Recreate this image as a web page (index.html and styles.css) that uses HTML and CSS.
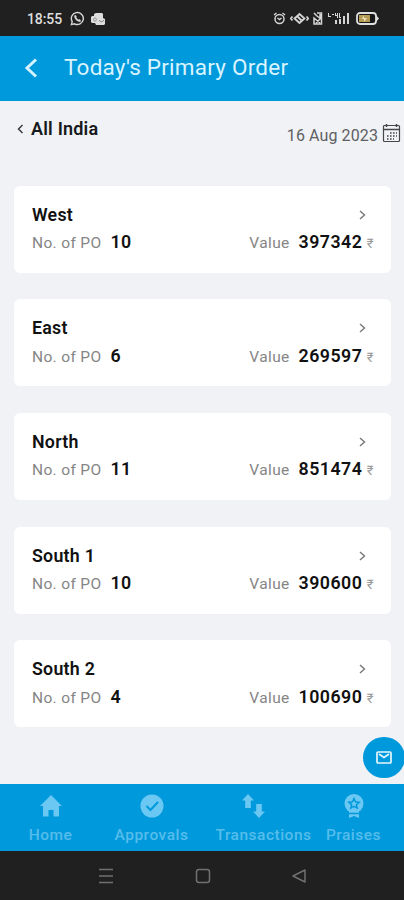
FILE: index.html
```
<!DOCTYPE html>
<html lang="en">
<head>
<meta charset="utf-8">
<title>Today's Primary Order</title>
<link rel="stylesheet" href="styles.css">
</head>
<body>
<div class="phone">
  <div class="status">
    <span class="clock">18:55</span>
    <svg class="whatsapp" width="15" height="15" viewBox="0 0 15 15" fill="none" stroke="#d8d8d8"><path stroke-width="1.4" d="M1.4 13.6l.8-3A6 6 0 1 1 4.500 12.800z"/><path stroke-width="1.800" d="M5 4.500c0 3 2.500 5.500 5.500 5.500M5 4.500l1 1.800M10.500 10l-1.700-1"/></svg>
    <svg class="outlook" width="14" height="12" viewBox="0 0 14 12"><path fill="#ddd" d="M5 0h6l1 1v4l2 1v5l-1 1H5L4 10H1L0 9V4l1-1h2V1z"/><circle cx="4" cy="6.500" r="1.500" fill="none" stroke="#999"/><path d="M8 7.500l3 1.500 2-2" fill="none" stroke="#888"/></svg>
    <div class="indicators">
      <svg width="13" height="13" viewBox="0 0 13 13" fill="none" stroke="#d4d4d4" stroke-width="1.500"><circle cx="6.500" cy="7" r="4.500"/><path d="M1 3l2.500-2M12 3L9.500 1M4.500 6l2 1.500 2-1.500"/></svg>
      <svg width="19" height="13" viewBox="0 0 19 13" fill="none" stroke="#d4d4d4" stroke-width="1.800"><path d="M4.500 6.500l5-4.500 5 4.500-5 4.500z"/><path d="M7 4l5 5M2.500 4.500L.8 6.500l1.700 2M16.500 4.500l1.700 2-1.700 2"/></svg>
      <svg width="10" height="13" viewBox="0 0 10 13" fill="none" stroke="#d4d4d4" stroke-width="1.500"><path d="M1 1l3 3M4 1h4.500v11H1V6l6 5M4 4l4 3M7 2v5L3 11"/></svg>
      <svg width="23" height="13" viewBox="0 0 23 13" fill="#d4d4d4"><path d="M1 1h1v3h2v1H1zM5 2h2v1H5zM8 1h1v2h1V1h1v5h-1V4H8zM12 1h1v4h1v1h-2zM8 8h2v4H8zM12 7h2v5h-2zM16 4h2v8h-2zM20 1h2v11h-2z"/></svg>
      <svg class="battery" width="24" height="13" viewBox="0 0 24 13"><rect x="1" y="1" width="19" height="11" rx="3" fill="#171717" stroke="#dedede" stroke-width="1.800"/><path d="M3 3h11v7H3z" fill="#b59b53"/><path d="M8 3v3h3L8 10V7H6z" fill="#eadfbd"/><path d="M20 3l3 3.500-3 3.500z" fill="#dedede"/></svg>
    </div>
  </div>
  <header class="header">
    <svg width="14" height="20" viewBox="0 0 14 20" fill="none" stroke="#d4f2ff" stroke-width="3"><path d="M12 1.500L3 10l9 8.500"/></svg>
    <h1>Today's Primary Order</h1>
  </header>
  <main class="content">
    <div class="filters">
      <div class="region"><svg width="7" height="10" viewBox="0 0 7 10" fill="none" stroke="#333" stroke-width="1.400"><path d="M5.500 1l-4 4 4 4"/></svg><span>All India</span></div>
      <div class="date"><span>16 Aug 2023</span><svg width="19" height="20" viewBox="0 0 19 20" fill="none" stroke="#454749"><rect x="1.500" y="2.500" width="16" height="16" rx="1" stroke-width="1.200"/><path stroke-width="1.500" d="M1 6.500h17M4.500 1v3M14.500 1v3"/><path stroke-width="1.600" stroke-dasharray="1.600 1.400" d="M8 10h7M5 13h10M5 16h7"/></svg></div>
    </div>
    <div class="cards">
      <section class="card"><div class="row"><h2>West</h2><svg class="chevron" viewBox="0 0 7 10"><path d="M1 1l4.500 4L1 9"/></svg></div><div class="row"><div class="count">No. of PO <b>10</b></div><div class="value">Value <b>397342</b><i>₹</i></div></div></section>
      <section class="card"><div class="row"><h2>East</h2><svg class="chevron" viewBox="0 0 7 10"><path d="M1 1l4.500 4L1 9"/></svg></div><div class="row"><div class="count">No. of PO <b>6</b></div><div class="value">Value <b>269597</b><i>₹</i></div></div></section>
      <section class="card"><div class="row"><h2>North</h2><svg class="chevron" viewBox="0 0 7 10"><path d="M1 1l4.500 4L1 9"/></svg></div><div class="row"><div class="count">No. of PO <b>11</b></div><div class="value">Value <b>851474</b><i>₹</i></div></div></section>
      <section class="card"><div class="row"><h2>South 1</h2><svg class="chevron" viewBox="0 0 7 10"><path d="M1 1l4.500 4L1 9"/></svg></div><div class="row"><div class="count">No. of PO <b>10</b></div><div class="value">Value <b>390600</b><i>₹</i></div></div></section>
      <section class="card"><div class="row"><h2>South 2</h2><svg class="chevron" viewBox="0 0 7 10"><path d="M1 1l4.500 4L1 9"/></svg></div><div class="row"><div class="count">No. of PO <b>4</b></div><div class="value">Value <b>100690</b><i>₹</i></div></div></section>
    </div>
    <div class="mail"><svg width="16" height="13" viewBox="0 0 16 13" fill="none" stroke="#e5f7ff" stroke-width="1.700"><rect x="1" y="1" width="14" height="11" rx="1"/><path d="M3 3l5 3.500L13 3"/></svg></div>
  </main>
  <nav class="tabs">
    <div class="tab"><svg width="24" height="24" viewBox="0 0 24 24"><path d="M12 1L1 12h3v10.500h5.500V16h5v6.500H20V12h3z"/></svg><span>Home</span></div>
    <div class="tab"><svg width="24" height="24" viewBox="0 0 24 24"><circle cx="12" cy="12" r="11.500"/><path class="cut" d="M6.500 12l4 4L18 8"/></svg><span>Approvals</span></div>
    <div class="tab wide"><svg width="24" height="24" viewBox="0 0 24 24"><path d="M7 0l6 6.500H9.800V14H4.200V6.500H1zM15.200 10h5.600v7.500H24L18 24l-6-6.500h3.200z"/></svg><span>Transactions</span></div>
    <div class="tab"><svg width="24" height="24" viewBox="0 0 24 24"><path d="M7 16h10v8l-5-2-5 2z"/><circle cx="12" cy="9.500" r="9.500"/><path class="cut star" d="M12 4.500l1.500 3.300 3.600.4-2.700 2.400.8 3.500-3.200-1.800-3.200 1.800.8-3.500-2.700-2.400 3.600-.4zM7 19.500h10"/></svg><span>Praises</span></div>
  </nav>
  <div class="system">
    <svg width="16" height="16" viewBox="0 0 16 16"><path d="M1 1.500h14M1 8h14M1 14.500h14"/></svg>
    <svg width="16" height="16" viewBox="0 0 16 16"><rect x="1.500" y="1.500" width="13" height="13" rx="2.500"/></svg>
    <svg width="16" height="16" viewBox="0 0 16 16"><path stroke-linejoin="round" d="M14 2v12L2 8z"/></svg>
  </div>
</div>
</body>
</html>
```
FILE: styles.css
```
* { box-sizing: border-box; }
body { margin: 0; font-family: Roboto, "Noto Sans", sans-serif; }
h1, h2 { margin: 0; }
svg { display: block; flex: none; }
.phone { width: 404px; height: 900px; display: flex; flex-direction: column; overflow: hidden; background: #f0f2f6; }
.status { height: 36px; background: #202020; display: flex; align-items: center; padding: 1px 24px 0 27px; color: #dedede; }
.clock { font-size: 14px; font-weight: 500; width: 43px; letter-spacing: -.1px; }
.outlook { margin-left: 6px; }
.indicators { display: flex; align-items: center; gap: 4px; margin-left: auto; }
.battery { margin-left: 2px; }
.header { height: 64.500px; background: #0099dc; display: flex; align-items: center; padding: 0 0 0 24px; gap: 26px; color: #d9f4ff; }
h1 { font-size: 22.500px; line-height: 26px; font-weight: 400; letter-spacing: .23px; padding-bottom: 3px; white-space: nowrap; }
.content { height: 683px; position: relative; }
.filters { height: 85px; display: flex; justify-content: space-between; align-items: flex-start; padding: 17.500px 3px 0 17px; }
.region { display: flex; align-items: center; gap: 7px; font-size: 18px; line-height: 22px; font-weight: 600; color: #17191b; letter-spacing: .2px; }
.date { display: flex; align-items: center; gap: 4px; padding-top: 5.500px; font-size: 16px; line-height: 24px; color: #5e6062; letter-spacing: .1px; }
.date svg { margin-top: -5px; }
.cards { display: flex; flex-direction: column; gap: 26.700px; padding: 0 13px 0 13.500px; }
.card { height: 87px; border-radius: 6px; background: #fff; padding: 17px 17.500px 0 18.500px; }
.row { display: flex; justify-content: space-between; height: 27.500px; line-height: 24px; white-space: nowrap; }
h2 { font-size: 17.800px; font-weight: 600; color: #111; letter-spacing: .25px; }
.chevron { width: 7px; height: 10px; margin: 7px 8px 0 0; fill: none; stroke: #777; stroke-width: 1.400; }
.count, .value { display: flex; align-items: baseline; font-size: 15.500px; color: #858585; letter-spacing: .35px; }
.row b { color: #111; font-size: 17.800px; font-weight: 600; letter-spacing: .45px; margin-left: 9px; }
.row i { font-style: normal; font-size: 13px; letter-spacing: 0; margin-left: 4.500px; color: #999; }
.mail { position: absolute; left: 363px; top: 636px; width: 41.500px; height: 41.500px; border-radius: 50%; background: #0099dc; display: flex; align-items: center; justify-content: center; }
.tabs { height: 67.500px; background: #0099dc; display: flex; padding: 10px 0 0; color: #56bdeb; }
.tab { width: 101px; display: flex; flex-direction: column; align-items: center; gap: 8px; font-size: 15.500px; line-height: 18px; letter-spacing: .5px; font-weight: 500; white-space: nowrap; }
.wide span { margin-left: 22px; }
.tab svg { fill: #6bc8f2; }
.tab .cut { fill: none; stroke: #0099dc; stroke-width: 2; }
.tab .star { stroke-width: 1.500; }
.system { flex: 1; background: #202020; display: flex; gap: 80.500px; padding: 17px 0 0 98px; }
.system svg { fill: none; stroke: #707070; stroke-width: 1.500; }
```
